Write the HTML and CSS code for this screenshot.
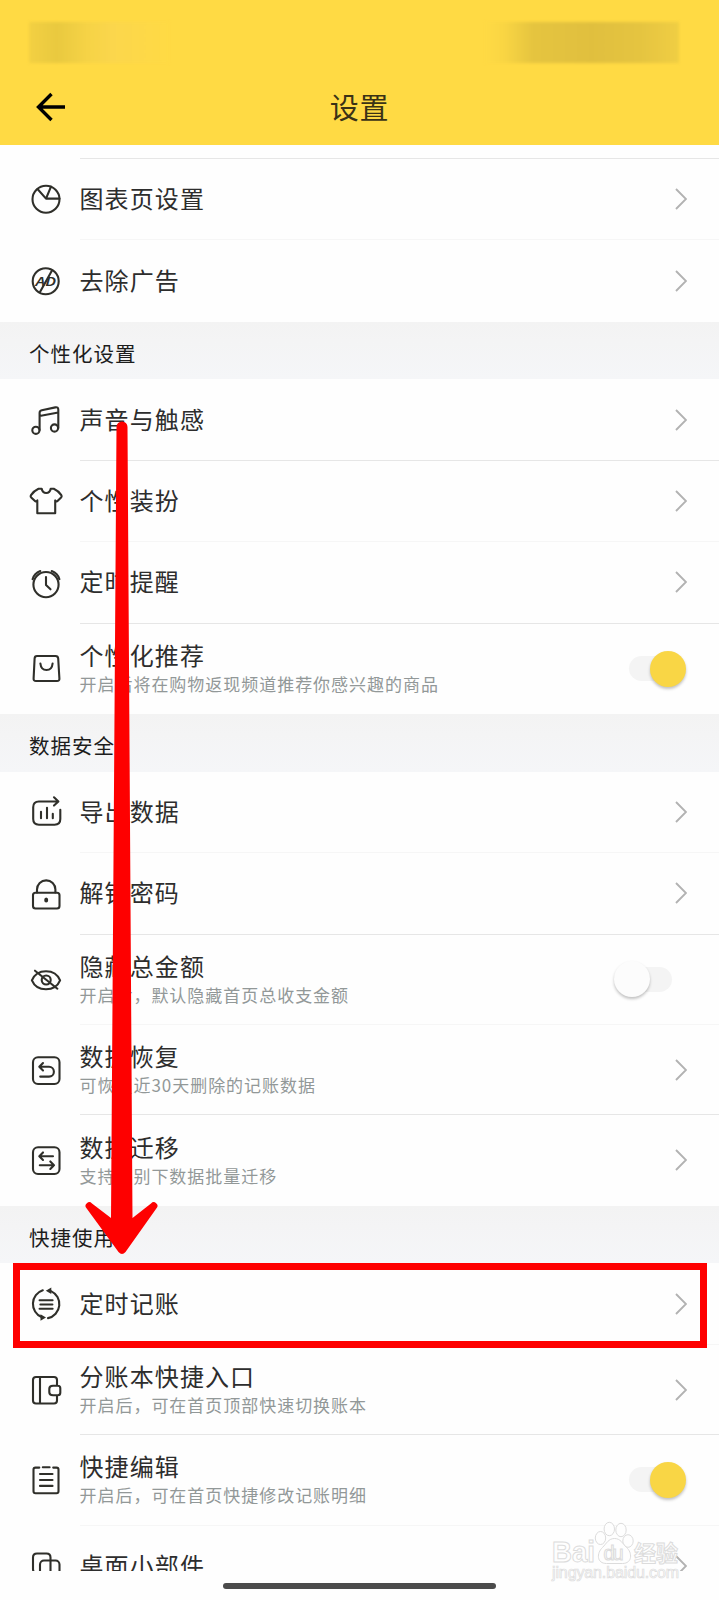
FILE: index.html
```html
<!DOCTYPE html>
<html lang="zh-CN">
<head>
<meta charset="utf-8">
<title>设置</title>
<link rel="stylesheet" href="styles.css">
</head>
<body>
<div class="screen">
  <header class="header">
    <div class="status"><span class="smudge smudge-left"></span><span class="smudge smudge-right"></span></div>
    <div class="navbar">
      <svg class="back" viewBox="0 0 30 30"><path d="M15.500 2 2.500 15l13 13M2.500 15H29"/></svg>
      <h1 class="title">设置</h1>
    </div>
  </header>

  <main class="list">
    <div class="row first faint">
      <svg class="icon" viewBox="0 0 36 36"><circle cx="18" cy="18.200" r="13.500"/><path d="M31.500 17.600H18L9.500 8M18 17.600l5-12"/></svg>
      <div class="body"><div class="name">图表页设置</div><svg class="chev" viewBox="0 0 12 22"><path d="m1 1 10 10L1 21"/></svg></div>
    </div>
    <div class="row last">
      <svg class="icon" viewBox="0 0 36 36"><circle cx="17.700" cy="18.200" r="13"/><path d="M24 7.500 12 29"/><text x="7.500" y="23" textLength="20.500" lengthAdjust="spacingAndGlyphs" class="ad">AD</text></svg>
      <div class="body"><div class="name">去除广告</div><svg class="chev" viewBox="0 0 12 22"><path d="m1 1 10 10L1 21"/></svg></div>
    </div>

    <h2 class="section">个性化设置</h2>
    <div class="row">
      <svg class="icon" viewBox="0 0 36 36"><circle cx="7.900" cy="28.300" r="3.600"/><circle cx="26.500" cy="26" r="3.600"/><path d="M11.600 28V11q0-2.200 2.200-2.700l13.500-2.900q3-.600 3 2.300V26M11.600 14l18.700-3.500"/></svg>
      <div class="body"><div class="name">声音与触感</div><svg class="chev" viewBox="0 0 12 22"><path d="m1 1 10 10L1 21"/></svg></div>
    </div>
    <div class="row faint">
      <svg class="icon" viewBox="0 0 36 36"><path d="M10.500 5.700h3.200q.800 4.300 4.500 4.300t4.500-4.300h3.100q4.500 2 7.500 6.500.700 1.200-.200 2.200L29.500 18q-.800.800-2.300-.600V30.200H9.300V17.400q-1.500 1.400-2.300.600l-3.800-3.600q-.900-1-.200-2.200 3-4.500 7.500-6.500z"/></svg>
      <div class="body"><div class="name">个性装扮</div><svg class="chev" viewBox="0 0 12 22"><path d="m1 1 10 10L1 21"/></svg></div>
    </div>
    <div class="row">
      <svg class="icon" viewBox="0 0 36 36"><circle cx="18" cy="19.600" r="12.600"/><path d="M18 12v8l4.500 4.300M4.600 14.200Q6.200 8.200 12.300 6M31.400 14.200Q29.800 8.200 23.700 6"/></svg>
      <div class="body"><div class="name">定时提醒</div><svg class="chev" viewBox="0 0 12 22"><path d="m1 1 10 10L1 21"/></svg></div>
    </div>
    <div class="row tall last">
      <svg class="icon" viewBox="0 0 36 36"><path d="M9 5h18.500q2.500 0 2.700 2.500l1.200 20q.200 2.500-2.400 2.500H8q-2.600 0-2.400-2.500l1-20Q6.700 5 9 5zM12.400 12.500q.600 6.500 6.100 6.500t6.100-6.500"/></svg>
      <div class="body"><div class="names"><div class="name">个性化推荐</div><div class="note">开启后将在购物返现频道推荐你感兴趣的商品</div></div><span class="switch on"></span></div>
    </div>

    <h2 class="section">数据安全</h2>
    <div class="row faint">
      <svg class="icon" viewBox="0 0 36 36"><path d="M32.300 15.700V25q0 5.700-5.700 5.700H10.900Q5.200 30.700 5.200 25V13.200q0-5.700 5.700-5.700H30M26 3.300l4.400 4.200L26 11.600M13 17.800v6.500M19 13.800v10.500M24.800 19.800v4.500"/></svg>
      <div class="body"><div class="name">导出数据</div><svg class="chev" viewBox="0 0 12 22"><path d="m1 1 10 10L1 21"/></svg></div>
    </div>
    <div class="row">
      <svg class="icon" viewBox="0 0 36 36"><rect x="5" y="16.700" width="26.500" height="15.800" rx="2.500"/><path d="M9 16.500V13.600a9.200 9.200 0 0 1 18.400 0v2.900"/><ellipse class="dot" cx="18.200" cy="24" rx="2" ry="2.500"/></svg>
      <div class="body"><div class="name">解锁密码</div><svg class="chev" viewBox="0 0 12 22"><path d="m1 1 10 10L1 21"/></svg></div>
    </div>
    <div class="row tall faint">
      <svg class="icon" viewBox="0 0 36 36"><path d="M3.900 18.300C6.500 12 12 9.200 18 9.200s11.500 2.800 14.100 9.100C29.500 24.500 24 27.200 18 27.200S6.500 24.500 3.900 18.300zM7 8.700l22.400 18"/><circle cx="18.200" cy="18" r="4.500"/></svg>
      <div class="body"><div class="names"><div class="name">隐藏总金额</div><div class="note">开启后，默认隐藏首页总收支金额</div></div><span class="switch"></span></div>
    </div>
    <div class="row tall">
      <svg class="icon" viewBox="0 0 36 36"><rect x="5" y="5.200" width="26.500" height="26.800" rx="5"/><path d="M11.800 14.800H21a4.900 4.900 0 0 1 0 9.800h-8.800M15 11l-3.700 3.800 3.700 3.700"/></svg>
      <div class="body"><div class="names"><div class="name">数据恢复</div><div class="note">可恢复近30天删除的记账数据</div></div><svg class="chev" viewBox="0 0 12 22"><path d="m1 1 10 10L1 21"/></svg></div>
    </div>
    <div class="row tall last">
      <svg class="icon" viewBox="0 0 36 36"><rect x="5" y="5.200" width="26.500" height="26.800" rx="5"/><path d="M25 14.200H11.500M15 10.400l-3.700 3.800 3.700 3.700M11.800 23.200H26M22.300 19.400l3.700 3.800-3.700 3.700"/></svg>
      <div class="body"><div class="names"><div class="name">数据迁移</div><div class="note">支持类别下数据批量迁移</div></div><svg class="chev" viewBox="0 0 12 22"><path d="m1 1 10 10L1 21"/></svg></div>
    </div>

    <h2 class="section">快捷使用</h2>
    <div class="row faint">
      <svg class="icon" viewBox="0 0 36 36"><path d="M14.800 4.300A14.300 14.300 0 0 0 13.500 31M23 5.100a14.300 14.300 0 0 1-3 27M11.600 14.200h13M12.400 18.500h12M11.600 22.800h13"/><path class="dot" d="m17.800 4.800 5.500-3.300v6.500zM18 31.400l-5.500 3.300v-6.500z"/></svg>
      <div class="body"><div class="name">定时记账</div><svg class="chev" viewBox="0 0 12 22"><path d="m1 1 10 10L1 21"/></svg></div>
    </div>
    <div class="row tall">
      <svg class="icon" viewBox="0 0 36 36"><path d="M29 13.500V8q0-3-3-3H8Q5 5 5 8v20.500q0 3 3 3h18q3 0 3-3V24M12 5v26.500M25 13.800h4.800q2.500 0 2.500 2.500v4.500q0 2.500-2.500 2.500H25q-3.700 0-3.700-3v-3.500q0-3 3.700-3z"/></svg>
      <div class="body"><div class="names"><div class="name">分账本快捷入口</div><div class="note">开启后，可在首页顶部快速切换账本</div></div><svg class="chev" viewBox="0 0 12 22"><path d="m1 1 10 10L1 21"/></svg></div>
    </div>
    <div class="row tall faint">
      <svg class="icon" viewBox="0 0 36 36"><path d="M11.300 5.600H7.500q-2 0-2 2v21.600q0 2 2 2h21q2 0 2-2V7.600q0-2-2-2h-3.300M14.800 5.200h6.800M12 12h12.500M12 18h12.500M12 23.900h12.500"/></svg>
      <div class="body"><div class="names"><div class="name">快捷编辑</div><div class="note">开启后，可在首页快捷修改记账明细</div></div><span class="switch on"></span></div>
    </div>
    <div class="row last">
      <svg class="icon" viewBox="0 0 36 36"><path d="M11 25H9q-4 0-4-4V9.500q0-4 4-4h9.500q4 0 4 4V25"/><rect x="12" y="12.500" width="19.500" height="19" rx="4"/></svg>
      <div class="body"><div class="name">桌面小部件</div><svg class="chev" viewBox="0 0 12 22"><path d="m1 1 10 10L1 21"/></svg></div>
    </div>
  </main>

  <footer class="footer"><span class="home"></span></footer>

  <svg class="arrow" viewBox="0 0 80 840"><path d="M34.500 8a5.500 5.500 0 0 1 11 0L50.500 799 69 784.500a3.500 3.500 0 0 1 5.500 4.800L43.500 833q-3.500 4-7 0L4.500 789.300A3.500 3.500 0 0 1 10 784.500L29 799z"/></svg>
  <div class="frame"></div>

  <svg class="watermark" viewBox="0 0 136 72">
    <text x="3" y="46" class="wm-big" textLength="43" lengthAdjust="spacingAndGlyphs">Bai</text>
    <text x="85" y="44.500" class="wm-cn" textLength="44">经验</text>
    <ellipse cx="51.500" cy="22" rx="5.200" ry="6.500"/><ellipse cx="60.300" cy="13" rx="5.200" ry="6.700"/><ellipse cx="72" cy="14" rx="5.200" ry="6.700"/><ellipse cx="79" cy="25" rx="5.200" ry="6.300"/>
    <path d="M65.500 22.500c-6 0-8 5-12 9-6 5.500-6 16 4 16h16c10 0 10-11 4-16-4-4-6-9-12-9z"/>
    <text x="54.500" y="44" class="wm-du" textLength="20">du</text>
    <text x="3" y="61.500" class="wm-url" textLength="127">jingyan.baidu.com</text>
  </svg>
</div>
</body>
</html>
```
FILE: styles.css
```css
* { box-sizing: border-box; }

body {
  margin: 0;
  font-family: "Noto Sans CJK SC", sans-serif;
  background: #fefefe;
  color: #2d2d2d;
}

.screen {
  position: relative;
  width: 719px;
  height: 1600px;
  overflow: hidden;
  display: flex;
  flex-direction: column;
}

.header {
  height: 145px;
  flex: none;
  background: #ffda44;
  display: flex;
  flex-direction: column;
}

.status {
  height: 70px;
  padding: 22px 40px 7px 29px;
  display: flex;
  justify-content: space-between;
}

.smudge { height: 41px; filter: blur(1.500px); }
.smudge-left {
  width: 140px;
  background: linear-gradient(90deg, #f3d042, #e9c93f 20%, #f6d346 42%, #fbd64c 60%, #ffda44);
}
.smudge-right {
  width: 194px;
  background: linear-gradient(90deg, #ffda44, #f9d543 10%, #e5c43f 25%, #e0bf3e 55%, #e5c440 80%, #f0ce43);
}

.navbar {
  height: 75px;
  padding: 0 36px 2px;
  display: grid;
  grid-template-columns: 30px 1fr 30px;
  align-items: center;
}
.back { width: 30px; height: 30px; fill: none; stroke: #000; stroke-width: 3.400; }
.title {
  margin: -2px 0 0;
  text-align: center;
  font-size: 29px;
  line-height: 40px;
  font-weight: 400;
  letter-spacing: .800px;
  color: #3a3216;
}

.list {
  height: 1426px;
  flex: none;
  padding-top: 13px;
  overflow: hidden;
}

.section {
  margin: 0;
  height: 57.800px;
  padding: 7px 29px 0;
  font-size: 20.500px;
  line-height: 48px;
  font-weight: 400;
  letter-spacing: 1px;
  color: #1d1d1d;
  background: linear-gradient(#f3f3f3, #f4f4f5 35%, #f5f6f8);
}

.row {
  height: 81.400px;
  padding-left: 28px;
  display: flex;
  align-items: center;
  gap: 15.500px;
}
.row.first { height: 82.200px; }
.row.tall { height: 90.400px; }

.icon {
  width: 36px;
  height: 36px;
  flex: none;
  fill: none;
  stroke: #2f2f2a;
  stroke-width: 2.100;
  stroke-linecap: round;
  stroke-linejoin: round;
}
.icon .dot { fill: #2f2f2a; stroke: none; }
.icon .ad { font: italic 600 13px "Noto Sans", sans-serif; fill: #2f2f2a; stroke: none; }

.body {
  flex: 1;
  height: 100%;
  padding-right: 32px;
  display: flex;
  align-items: center;
  justify-content: space-between;
  border-bottom: 1px solid #e6e6e6;
}
.row.faint .body { border-bottom-color: #f6f6f6; }
.row.first .body { border-top: 1px solid #e6e6e6; }
.row.last .body { border-bottom: 0; }

.names { display: flex; flex-direction: column; padding-top: 1px; }
.name { margin-top: -2px; font-size: 24px; line-height: 32px; letter-spacing: 1.100px; white-space: nowrap; }
.note { font-size: 17px; line-height: 26px; letter-spacing: .970px; color: #929898; white-space: nowrap; }

.chev { width: 12px; height: 22px; fill: none; stroke: #b2b2b2; stroke-width: 1.900; }

.switch {
  width: 43px;
  height: 25px;
  margin-right: 15px;
  border-radius: 13px;
  background: #f4f4f4;
  display: flex;
  align-items: center;
}
.switch::before {
  content: "";
  flex: none;
  width: 36px;
  height: 36px;
  margin-left: -15px;
  border-radius: 50%;
  background: #fcfcfc;
  box-shadow: 0 2px 3px rgba(0, 0, 0, .24);
}
.switch.on::before { margin-left: 21px; background: #f9d645; }

.footer {
  flex: 1;
  padding: 12px 0 0 223px;
}
.home { display: block; width: 273px; height: 6px; border-radius: 3px; background: #4b4b4b; }

/* Annotation layer */
.arrow { position: absolute; left: 82px; top: 419px; width: 80px; height: 840px; fill: #fe0000; }
.frame { position: absolute; left: 13px; top: 1263px; width: 694px; height: 85px; border: 7px solid #fe0000; }

.watermark {
  position: absolute;
  left: 549px;
  top: 1516px;
  width: 136px;
  height: 72px;
  fill: #fefefe;
  stroke: #dcdcdc;
  stroke-width: 1;
}
.wm-big { font: 700 29px "Liberation Sans", sans-serif; }
.wm-du { font: 400 20px "Liberation Sans", sans-serif; }
.wm-cn { font: 700 22px "Noto Sans CJK SC", sans-serif; }
.wm-url { font: 400 16px "Liberation Sans", sans-serif; stroke-width: .700; }
```
